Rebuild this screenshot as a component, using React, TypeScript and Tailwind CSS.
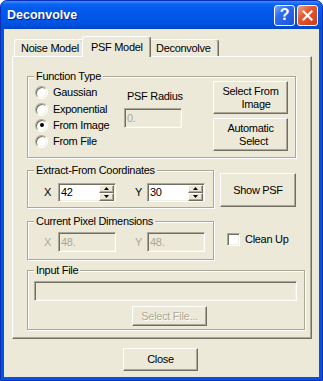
import React from "react";

const raised =
  "border border-t-white border-l-white border-r-[#716F64] border-b-[#716F64] shadow-[inset_-1px_-1px_0_#ACA899] bg-[#ECE9D8]";
const sunken =
  "border border-t-[#ACA899] border-l-[#ACA899] border-b-white border-r-white shadow-[inset_1px_1px_0_#716F64,inset_-1px_-1px_0_#F1EFE2]";

const Button = ({
  children,
  className = "",
  disabled = false,
}: {
  children: React.ReactNode;
  className?: string;
  disabled?: boolean;
}) => (
  <div
    className={`flex flex-col items-center justify-center leading-[13px] ${raised} ${
      disabled ? "text-[#ACA899] [text-shadow:1px_1px_0_white]" : "text-black"
    } ${className}`}
  >
    {children}
  </div>
);

const Field = ({
  children,
  className = "",
  disabled = false,
}: {
  children?: React.ReactNode;
  className?: string;
  disabled?: boolean;
}) => (
  <div
    className={`flex items-center pl-[2px] ${sunken} ${
      disabled ? "bg-[#ECE9D8] text-[#ACA899]" : "bg-white text-black"
    } ${className}`}
  >
    {children}
  </div>
);

const Group = ({
  title,
  className = "",
  children,
}: {
  title: string;
  className?: string;
  children?: React.ReactNode;
}) => (
  <div
    className={`border border-[#ACA899] shadow-[inset_1px_1px_0_white,1px_1px_0_white] ${className}`}
  >
    <div className="-mt-[7px] ml-[6px] px-[2px] w-fit bg-[#ECE9D8] leading-[13px]">
      {title}
    </div>
    {children}
  </div>
);

const Radio = ({ checked = false }: { checked?: boolean }) => (
  <div
    className={`w-[13px] h-[13px] rounded-full flex items-center justify-center bg-white ${sunken}`}
  >
    {checked && <div className="w-[4px] h-[4px] rounded-full bg-black" />}
  </div>
);

const SpinBtn = ({ up = false }: { up?: boolean }) => (
  <div className={`w-[15px] h-[8px] flex items-center justify-center ${raised}`}>
    <svg width="5" height="3" viewBox="0 0 5 3">
      {up ? <path d="M0 3h5L2.5 0z" fill="#000" /> : <path d="M0 0h5L2.5 3z" fill="#000" />}
    </svg>
  </div>
);

const Spin = ({ value }: { value: string }) => (
  <Field className="w-[58px] h-[19px] pr-[1px] justify-between">
    <span className="leading-[13px]">{value}</span>
    <div className="flex flex-col">
      <SpinBtn up />
      <SpinBtn />
    </div>
  </Field>
);

const Tab = ({
  label,
  selected = false,
  className = "",
}: {
  label: string;
  selected?: boolean;
  className?: string;
}) => (
  <div
    className={`flex items-center rounded-t-[3px] bg-[#ECE9D8] border-t border-l border-t-white border-l-white border-r border-r-[#716F64] shadow-[inset_-1px_0_0_#ACA899] leading-[13px] ${
      selected ? "h-[21px] -mb-[1px] relative z-10 pl-[8px]" : "h-[17px] pl-[6px]"
    } ${className}`}
  >
    {label}
  </div>
);

export default function App() {
  const radios = ["Gaussian", "Exponential", "From Image", "From File"];
  return (
    <div className="w-[323px] h-[381px] bg-white font-['Liberation_Sans',Arial,sans-serif] text-[11px] tracking-[-0.3px] text-black whitespace-nowrap">
      <div className="w-[323px] h-[381px] flex flex-col rounded-t-[7px] bg-[#0054E3] border border-[#0A2FB8] overflow-hidden">
        {/* title bar */}
        <div className="h-[28px] flex items-center pl-[6px] pr-[4px] bg-[linear-gradient(180deg,#3D8EFF_0%,#0A62F0_12%,#0058EC_35%,#0055E5_75%,#004DD6_92%,#0044C4_100%)]">
          <span className="text-white font-bold text-[12.5px] tracking-normal [text-shadow:1px_1px_0_#0A1E8C]">
            Deconvolve
          </span>
          <div className="ml-auto flex gap-[2px]">
            <div className="w-[21px] h-[21px] rounded-[3px] border border-white bg-[linear-gradient(135deg,#7FA8F8_0%,#2E6CF0_35%,#1A52DA_100%)] flex items-center justify-center text-white font-bold text-[16px] leading-none">
              ?
            </div>
            <div className="w-[21px] h-[21px] rounded-[3px] border border-white bg-[linear-gradient(135deg,#F2A188_0%,#E1582F_40%,#C8401E_100%)] flex items-center justify-center">
              <svg width="11" height="11" viewBox="0 0 11 11">
                <path d="M1.5 1.5l8 8M9.5 1.5l-8 8" stroke="#fff" strokeWidth="2.2" strokeLinecap="square" />
              </svg>
            </div>
          </div>
        </div>

        {/* client area */}
        <div className="flex-1 mx-[3px] mb-[3px] bg-[#ECE9D8] flex flex-col">
          <div className="mt-[7px] pl-[10px] h-[20px] flex items-end">
            <Tab label="Noise Model" className="w-[70px]" />
            <Tab label="PSF Model" selected className="w-[69px] -ml-[2px]" />
            <Tab label="Deconvolve" className="w-[70px] -ml-[2px]" />
          </div>

          <div className={`ml-[8px] w-[300px] h-[283px] flex flex-col pl-[14px] ${raised}`}>
            <Group title="Function Type" className="mt-[19px] w-[269px] h-[82px]">
              <div className="flex">
                <div className="ml-[7px] mt-[1px] w-[89px] flex flex-col">
                  {radios.map((r, i) => (
                    <div key={r} className={`flex items-center gap-[5px] ${i === 0 ? "h-[17px]" : "h-[16px]"}`}>
                      <Radio checked={r === "From Image"} />
                      <span className="leading-[13px]">{r}</span>
                    </div>
                  ))}
                </div>
                <div className="w-[58px] flex flex-col">
                  <span className="mt-[7px] pl-[3px] leading-[13px]">PSF Radius</span>
                  <Field disabled className="mt-[5px] h-[20px]">
                    <span className="leading-[13px]">0.</span>
                  </Field>
                </div>
                <div className="ml-[31px] -mt-[2px] flex flex-col gap-[4px]">
                  <Button className="w-[75px] h-[33px]">
                    <span>Select From</span>
                    <span className="pl-[11px]">Image</span>
                  </Button>
                  <Button className="w-[75px] h-[33px]">
                    <span>Automatic</span>
                    <span className="pl-[6px]">Select</span>
                  </Button>
                </div>
              </div>
            </Group>

            <div className="flex mt-[12px]">
              <div className="w-[187px] flex flex-col">
                <Group title="Extract-From Coordinates" className="h-[38px]">
                  <div className="flex items-center mt-[6px] pl-[16px]">
                    <span className="w-[14px] leading-[13px]">X</span>
                    <Spin value="42" />
                    <span className="ml-[19px] w-[12px] leading-[13px]">Y</span>
                    <Spin value="30" />
                  </div>
                </Group>
                <Group title="Current Pixel Dimensions" className="mt-[13px] h-[39px]">
                  <div className="flex items-center mt-[4px] pl-[16px] text-[#ACA899]">
                    <span className="w-[14px] leading-[13px]">X</span>
                    <Field disabled className="w-[58px] h-[20px]">
                      <span className="leading-[13px]">48.</span>
                    </Field>
                    <span className="ml-[19px] w-[12px] leading-[13px]">Y</span>
                    <Field disabled className="w-[58px] h-[20px]">
                      <span className="leading-[13px]">48.</span>
                    </Field>
                  </div>
                </Group>
              </div>
              <div className="ml-[6px] flex flex-col">
                <Button className="mt-[3px] w-[76px] h-[34px]">Show PSF</Button>
                <div className="mt-[26px] ml-[7px] flex items-center gap-[5px]">
                  <div className={`w-[13px] h-[13px] bg-white ${sunken}`} />
                  <span className="leading-[13px]">Clean Up</span>
                </div>
              </div>
            </div>

            <Group title="Input File" className="mt-[10px] w-[278px] h-[60px]">
              <Field disabled className="mt-[4px] ml-[6px] w-[263px] h-[20px]" />
              <Button disabled className="mt-[5px] ml-[104px] w-[75px] h-[20px]">
                Select File...
              </Button>
            </Group>
          </div>

          <Button className="mt-[9px] ml-[119px] w-[75px] h-[23px]">Close</Button>
        </div>
      </div>
    </div>
  );
}
